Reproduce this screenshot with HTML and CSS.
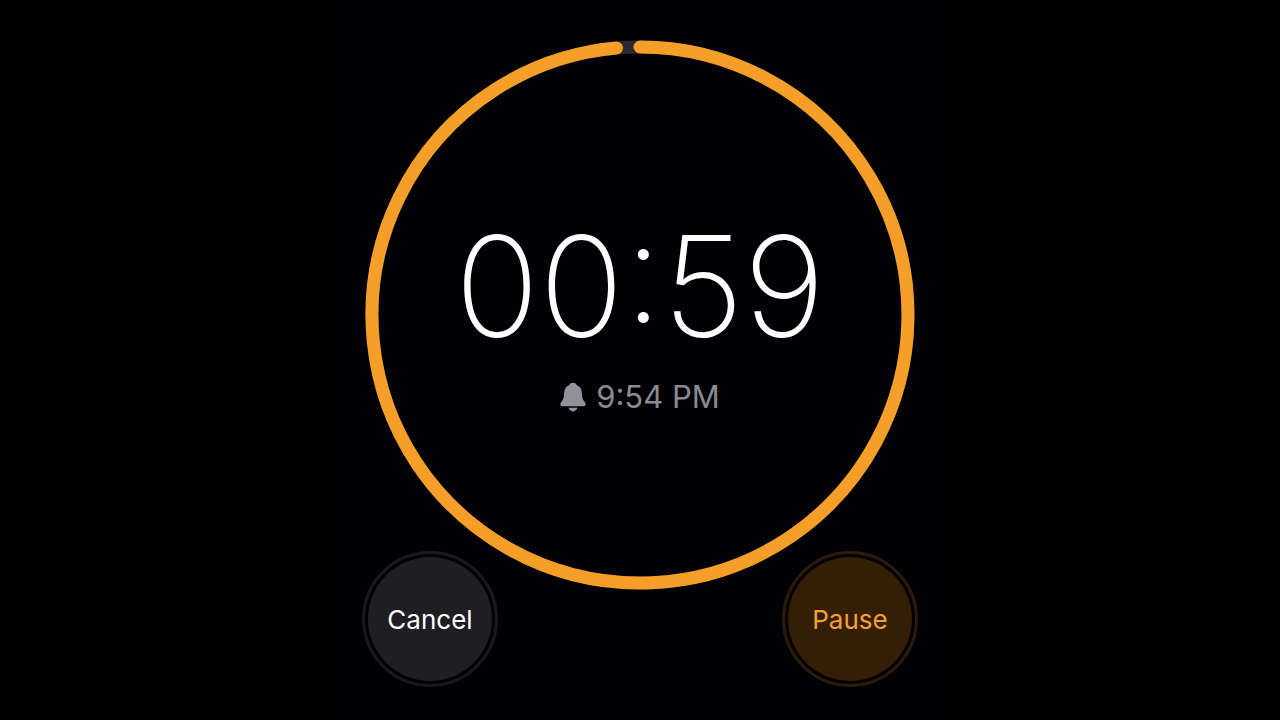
FILE: index.html
```
<!DOCTYPE html>
<html lang="en">
<head>
<meta charset="utf-8">
<meta name="viewport" content="width=device-width, initial-scale=1">
<title>Timer</title>
<link rel="stylesheet" href="styles.css">
</head>
<body>
<main class="timer">
  <section class="dial">
    <svg class="ring" viewBox="0 0 550 550" aria-hidden="true">
      <circle class="ring-track" cx="275" cy="275" r="268"/>
      <path class="ring-progress" d="M275 7A268 268 0 1 1 251.500 8.030"/>
    </svg>
    <div class="readout">
      <time class="remaining">00:59</time>
      <p class="alarm">
        <svg class="bell" viewBox="0 0 26 30" aria-hidden="true">
          <path d="M13 .8C11.300 .8 10 1.700 9.300 3C6 4.400 4.300 7.200 4.100 10.900C3.900 15 3.600 17 2 19.100C.9 20.500 .3 21.500 .3 22.500C.3 23.600 1.100 24.200 2.300 24.200H23.700C24.900 24.200 25.700 23.600 25.700 22.500C25.700 21.500 25.100 20.500 24 19.100C22.400 17 22.100 15 21.900 10.900C21.700 7.200 20 4.400 16.700 3C16 1.700 14.700 .8 13 .8Z"/>
          <path d="M8.600 25.800H17.400C16.900 27.900 15.200 29.400 13 29.400S9.100 27.900 8.600 25.800Z"/>
        </svg>
        <time>9:54 PM</time>
      </p>
    </div>
  </section>
  <div class="actions">
    <button class="action action-cancel" type="button">Cancel</button>
    <button class="action action-pause" type="button">Pause</button>
  </div>
</main>
</body>
</html>
```
FILE: styles.css
```
* {
  box-sizing: border-box;
}

body {
  margin: 0;
  background: #000;
  color: #fff;
  font-family: Inter, "Liberation Sans", sans-serif;
}

.timer {
  max-width: 608px;
  min-height: 100vh;
  margin: 0 auto;
  padding: 40px 26px 32px;
  background: #020106;
}

.dial {
  display: grid;
  place-items: center;
  max-width: 550px;
  margin: 0 auto;
}

.ring,
.readout {
  grid-area: 1 / 1;
}

.ring {
  display: block;
  width: 100%;
}

.ring-track,
.ring-progress {
  fill: none;
  stroke-width: 13;
}

.ring-track {
  stroke: #2b2a30;
}

.ring-progress {
  stroke: #f59e28;
  stroke-linecap: round;
}

.readout {
  display: flex;
  flex-direction: column;
  align-items: center;
  gap: 11px;
  padding-bottom: 7px;
}

.remaining {
  font-size: 140px;
  font-weight: 200;
  line-height: 160px;
}

.alarm {
  display: flex;
  align-items: center;
  gap: 10px;
  margin: 0;
  color: #8b8a90;
  font-size: 31px;
  line-height: 40px;
}

.bell {
  width: 26px;
  height: 30px;
  fill: #92909b;
}

.actions {
  display: flex;
  justify-content: space-between;
  margin-top: -39px;
}

.action {
  width: 136px;
  height: 136px;
  padding: 0;
  border: 3px solid;
  border-radius: 50%;
  background-clip: content-box;
  font: inherit;
  font-size: 26px;
  cursor: pointer;
  box-shadow: inset 0 0 0 3px #020106;
}

.action-cancel {
  border-color: #1a191d;
  background-color: #1f1e23;
  color: #fff;
}

.action-pause {
  border-color: #2a1b0b;
  background-color: #341e05;
  color: #f6a036;
}
```
